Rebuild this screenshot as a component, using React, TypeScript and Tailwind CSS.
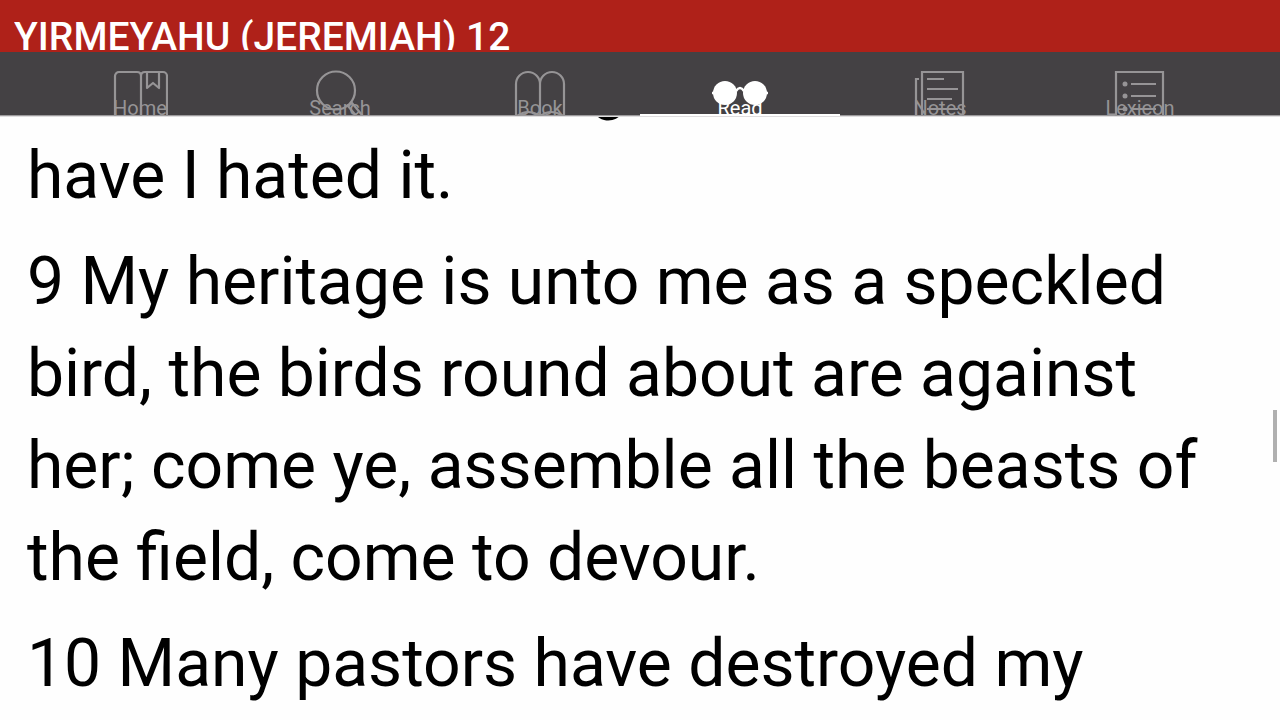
import type { ReactNode } from "react";

type Tab = { label: string; icon: ReactNode; active?: boolean };

const tabs: Tab[] = [
  {
    label: "Home",
    icon: (
      <>
        <path d="M3 50V6a4 4 0 0 1 4-4h18q4 0 4 4v44M29 50V6q0-4 4-4h18a4 4 0 0 1 4 4v44" />
        <path d="M35 2v16l6-5 6 5V2" />
      </>
    ),
  },
  {
    label: "Search",
    icon: (
      <>
        <circle cx="24" cy="20.500" r="19" />
        <path d="M36 36l4-3 10 12-4 3z" />
      </>
    ),
  },
  {
    label: "Book",
    icon: (
      <path d="M4 50V14a12 12 0 0 1 24 0v36M28 50V14a12 12 0 0 1 24 0v36M5 46q11-8 23 0q11-8 23 0" />
    ),
  },
  {
    label: "Read",
    active: true,
    icon: (
      <>
        <circle cx="13" cy="23" r="12" fill="currentColor" stroke="none" />
        <circle cx="43" cy="23" r="12" fill="currentColor" stroke="none" />
        <path d="M24 21q4-6 8 0M0 23h3M53 23h3" strokeWidth="2.500" />
      </>
    ),
  },
  {
    label: "Notes",
    icon: (
      <>
        <path d="M10 50V2h41v48M7 9H4v41" strokeLinejoin="miter" />
        <path d="M15 9h17M15 19h31M15 29h25M15 39h31" />
      </>
    ),
  },
  {
    label: "Lexicon",
    icon: (
      <>
        <path d="M4 50V2h47v48" strokeLinejoin="miter" />
        <path d="M19 14h25M19 26h25M19 39h25" />
        <g fill="currentColor" stroke="none">
          <circle cx="13" cy="14" r="2.500" />
          <circle cx="13" cy="26" r="2.500" />
          <circle cx="13" cy="39" r="2.500" />
        </g>
      </>
    ),
  },
];

const verses = [
  "forest; it cries out against me: therefore have I hated it.",
  "9 My heritage is unto me as a speckled bird, the birds round about are against her; come ye, assemble all the beasts of the field, come to devour.",
  "10 Many pastors have destroyed my",
];

export default function App() {
  return (
    <div className="flex h-screen flex-col overflow-hidden bg-[#fefefe] font-['Roboto',sans-serif]">
      <header className="h-13 shrink-0 bg-[#af2119] px-3.5 pt-3.5">
        <h1 className="h-9 overflow-hidden text-[39px] leading-[46px] font-medium whitespace-nowrap text-white">
          YIRMEYAHU (JEREMIAH) 12
        </h1>
      </header>
      <nav className="h-[65px] shrink-0 border-b border-[#dfdddf] bg-[#444144] px-10 shadow-[inset_0_-1px_0_#9c9a9c]">
        <div className="grid h-full grid-cols-6">
          {tabs.map((tab) => (
            <button
              key={tab.label}
              type="button"
              aria-current={tab.active ? "page" : undefined}
              className={
                tab.active
                  ? "flex flex-col items-center overflow-hidden border-b-2 border-white pt-[18px] text-white"
                  : "flex flex-col items-center overflow-hidden pt-[18px] text-[#969496]"
              }
            >
              <svg
                viewBox="0 0 56 50"
                className="h-[50px] w-14 shrink-0"
                fill="none"
                stroke="currentColor"
                strokeWidth="2.200"
                strokeLinejoin="round"
                aria-hidden="true"
              >
                {tab.icon}
              </svg>
              <span className="-mt-6 text-xl leading-6">{tab.label}</span>
            </button>
          ))}
        </div>
      </nav>
      <main className="relative min-h-0 flex-1 overflow-hidden px-[27px]">
        <div className="-mt-[79px] flex flex-col gap-3.5 text-[66px] leading-[92px] text-black">
          {verses.map((verse) => (
            <p key={verse}>{verse}</p>
          ))}
        </div>
        <div className="absolute top-[293px] right-[3px] h-13 w-1 bg-[#b0b0b0]" />
      </main>
    </div>
  );
}
